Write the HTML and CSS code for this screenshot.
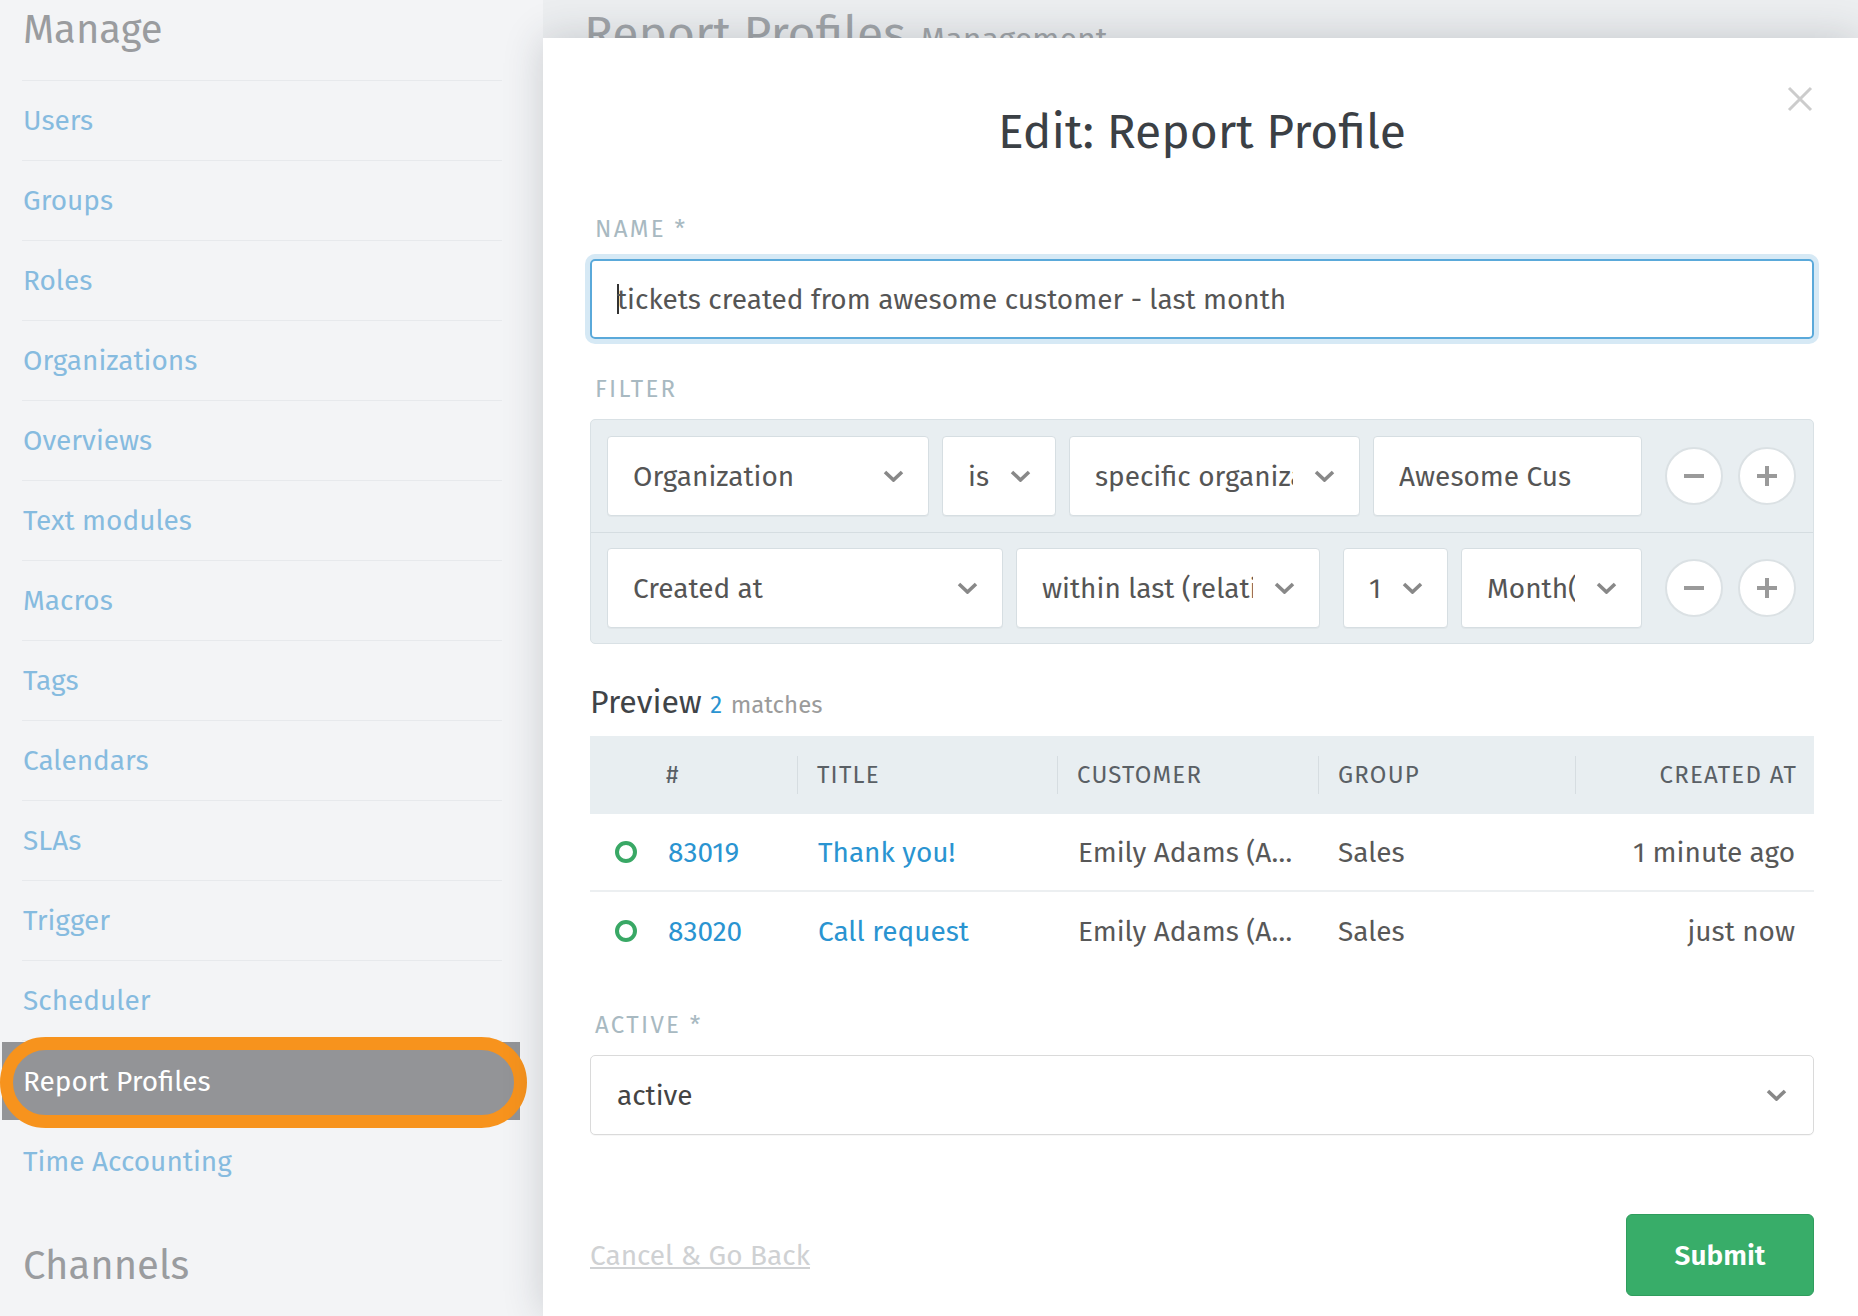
FILE: index.html
```html
<!DOCTYPE html>
<html lang="en">
<head>
<meta charset="utf-8">
<title>Edit: Report Profile</title>
<link rel="stylesheet" href="styles.css">
</head>
<body>
<div class="app">
  <aside class="sidebar">
    <h2 class="nav-heading">Manage</h2>
    <ul class="nav-list">
      <li class="nav-item">Users</li>
      <li class="nav-item">Groups</li>
      <li class="nav-item">Roles</li>
      <li class="nav-item">Organizations</li>
      <li class="nav-item">Overviews</li>
      <li class="nav-item">Text modules</li>
      <li class="nav-item">Macros</li>
      <li class="nav-item">Tags</li>
      <li class="nav-item">Calendars</li>
      <li class="nav-item">SLAs</li>
      <li class="nav-item">Trigger</li>
      <li class="nav-item">Scheduler</li>
      <li class="nav-item is-active">Report Profiles<span class="annotation"></span></li>
      <li class="nav-item">Time Accounting</li>
    </ul>
    <h2 class="nav-heading nav-heading--next">Channels</h2>
  </aside>

  <main class="main">
    <div class="page-header">
      <h1 class="page-title">Report Profiles <small class="page-subtitle">Management</small></h1>
    </div>

    <section class="modal">
      <span class="modal-close">
        <svg viewBox="0 0 26 26" width="26" height="26"><path d="M2 2 L24 24 M24 2 L2 24" stroke="#cccccc" stroke-width="3" fill="none"/></svg>
      </span>
      <h2 class="modal-title">Edit: Report Profile</h2>

      <div class="field-label field-label--first">Name *</div>
      <div class="text-input is-focused"><span class="caret"></span>tickets created from awesome customer - last month</div>

      <div class="field-label">Filter</div>
      <div class="filter-box">
        <div class="filter-row filter-row--first">
          <div class="select w-org"><span class="select-text">Organization</span><svg class="chevron" viewBox="0 0 21 12"><path d="M2 2 L10.5 10 L19 2" /></svg></div>
          <div class="select w-is"><span class="select-text">is</span><svg class="chevron" viewBox="0 0 21 12"><path d="M2 2 L10.5 10 L19 2" /></svg></div>
          <div class="select w-specific"><span class="select-text">specific organization</span><svg class="chevron" viewBox="0 0 21 12"><path d="M2 2 L10.5 10 L19 2" /></svg></div>
          <div class="select w-value"><span class="select-text">Awesome Cus</span></div>
          <span class="circle-btn gap-wide"><svg viewBox="0 0 22 22" width="22" height="22"><path d="M1 11 H21" /></svg></span>
          <span class="circle-btn gap-btn"><svg viewBox="0 0 22 22" width="22" height="22"><path d="M1 11 H21 M11 1 V21" /></svg></span>
        </div>
        <div class="filter-row filter-row--second">
          <div class="select w-created"><span class="select-text">Created at</span><svg class="chevron" viewBox="0 0 21 12"><path d="M2 2 L10.5 10 L19 2" /></svg></div>
          <div class="select w-within"><span class="select-text">within last (relative)</span><svg class="chevron" viewBox="0 0 21 12"><path d="M2 2 L10.5 10 L19 2" /></svg></div>
          <div class="select w-num gap-wide"><span class="select-text">1</span><svg class="chevron" viewBox="0 0 21 12"><path d="M2 2 L10.5 10 L19 2" /></svg></div>
          <div class="select w-month"><span class="select-text">Month(s)</span><svg class="chevron" viewBox="0 0 21 12"><path d="M2 2 L10.5 10 L19 2" /></svg></div>
          <span class="circle-btn gap-wide"><svg viewBox="0 0 22 22" width="22" height="22"><path d="M1 11 H21" /></svg></span>
          <span class="circle-btn gap-btn"><svg viewBox="0 0 22 22" width="22" height="22"><path d="M1 11 H21 M11 1 V21" /></svg></span>
        </div>
      </div>

      <h3 class="preview-title">Preview <span class="preview-count">2</span> <span class="preview-count-label">matches</span></h3>
      <div class="table">
        <div class="table-head">
          <div class="th th--blank"></div>
          <div class="th th--num">#</div>
          <div class="th th--sep">Title</div>
          <div class="th th--sep">Customer</div>
          <div class="th th--sep">Group</div>
          <div class="th th--sep th--right">Created at</div>
        </div>
        <div class="table-row table-row--divided">
          <div class="td td--icon"><span class="status-icon"></span></div>
          <div class="td td--num link">83019</div>
          <div class="td td--title link">Thank you!</div>
          <div class="td td--cust">Emily Adams (A…</div>
          <div class="td td--group">Sales</div>
          <div class="td td--right">1 minute ago</div>
        </div>
        <div class="table-row">
          <div class="td td--icon"><span class="status-icon"></span></div>
          <div class="td td--num link">83020</div>
          <div class="td td--title link">Call request</div>
          <div class="td td--cust">Emily Adams (A…</div>
          <div class="td td--group">Sales</div>
          <div class="td td--right">just now</div>
        </div>
      </div>

      <div class="field-label field-label--active">Active *</div>
      <div class="select select--full"><span class="select-text">active</span><svg class="chevron" viewBox="0 0 21 12"><path d="M2 2 L10.5 10 L19 2" /></svg></div>

      <div class="modal-footer">
        <span class="cancel-link">Cancel &amp; Go Back</span>
        <span class="submit-btn">Submit</span>
      </div>
    </section>
  </main>
</div>
</body>
</html>
```

FILE: styles.css
```css
* { box-sizing: border-box; }

html, body {
  margin: 0;
  padding: 0;
}

body {
  width: 1858px;
  height: 1316px;
  overflow: hidden;
  font-family: "Fira Sans", "Open Sans", "Noto Sans", sans-serif;
  background: #f3f4f6;
}

.app {
  display: flex;
  width: 1858px;
  height: 1316px;
}

/* ---------- Sidebar ---------- */
.sidebar {
  width: 543px;
  flex: none;
  height: 1316px;
  background: #f3f4f6;
  overflow: hidden;
}

.nav-heading {
  margin: 0 41px 0 22px;
  padding: 0 0 20px 1px;
  height: 81px;
  font-size: 40px;
  line-height: 60px;
  font-weight: 400;
  color: #9a9c9f;
  border-bottom: 1px solid #e7e9ec;
}

.nav-heading--next {
  margin-top: 35px;
  border-bottom: none;
}

.nav-list {
  list-style: none;
  margin: 0;
  padding: 0;
}

.nav-item {
  position: relative;
  display: flex;
  align-items: center;
  height: 80px;
  margin: 0 41px 0 22px;
  padding-left: 1px;
  font-size: 28px;
  color: #86bbdf;
  border-bottom: 1px solid #e7e9ec;
}

.nav-item:last-child {
  border-bottom: none;
}

.nav-item.is-active {
  height: 78px;
  margin: 1px 23px 1px 2px;
  padding-left: 21px;
  background: #939497;
  color: #ffffff;
  border-bottom: none;
}

.annotation {
  position: absolute;
  left: -2px;
  top: -5px;
  width: 527px;
  height: 91px;
  border: 13px solid #f7931d;
  border-radius: 46px;
  pointer-events: none;
}

/* ---------- Main ---------- */
.main {
  flex: 1;
  display: flex;
  flex-direction: column;
  min-width: 0;
  background: #eceef0;
}

.page-header {
  height: 38px;
  flex: none;
  overflow: hidden;
  padding-left: 41px;
}

.page-title {
  margin: 0;
  padding-top: 10px;
  font-size: 48px;
  line-height: 48px;
  font-weight: 400;
  color: #a0a4a8;
  white-space: nowrap;
}

.page-subtitle {
  font-size: 32px;
  margin-left: 2px;
}

/* ---------- Modal ---------- */
.modal {
  position: relative;
  z-index: 1;
  flex: 1;
  background: #ffffff;
  box-shadow: 0 0 38px rgba(40, 50, 60, 0.2);
  padding: 64px 44px 0 47px;
}

.modal-close {
  position: absolute;
  top: 48px;
  right: 45px;
  width: 26px;
  height: 26px;
}

.modal-close svg { display: block; }

.modal-title {
  margin: 0;
  text-align: center;
  font-size: 48px;
  line-height: 60px;
  font-weight: 400;
  color: #3b4045;
}

.field-label {
  margin: 35px 0 15px;
  padding-left: 5px;
  font-size: 24px;
  line-height: 30px;
  letter-spacing: 2.3px;
  text-transform: uppercase;
  color: #a8b9c1;
}

.field-label--first { margin-top: 52px; margin-bottom: 15px; }
.field-label--active { margin-top: 40px; margin-bottom: 15px; }

.text-input {
  display: flex;
  align-items: center;
  height: 80px;
  padding-left: 25px;
  border: 2px solid #5aa9da;
  border-radius: 5px;
  box-shadow: 0 0 0 5px #d6e9f5;
  font-size: 28px;
  color: #555555;
  white-space: nowrap;
}

.caret {
  display: inline-block;
  width: 2px;
  height: 30px;
  margin-right: -2px;
  background: #333333;
}

/* ---------- Filter ---------- */
.filter-box {
  background: #e8eef1;
  border: 1px solid #d9e1e5;
  border-radius: 5px;
}

.filter-row {
  display: flex;
  align-items: center;
  gap: 13px;
  padding: 16px 16px 16px 16px;
}

.filter-row--first {
  border-bottom: 1px solid #d5dde1;
}

.filter-row--second {
  padding-top: 15px;
  padding-bottom: 15px;
}

.select {
  display: flex;
  align-items: center;
  height: 80px;
  flex: none;
  padding: 0 24px 0 25px;
  background: #ffffff;
  border: 1px solid #d6dee2;
  border-radius: 4px;
  box-shadow: 0 1px 0 rgba(0, 0, 0, 0.03);
  font-size: 28px;
  color: #555555;
}

.select-text {
  flex: 1;
  min-width: 0;
  overflow: hidden;
  white-space: nowrap;
}

.chevron {
  flex: none;
  width: 21px;
  height: 12px;
  margin-left: 21px;
  fill: none;
  stroke: #888888;
  stroke-width: 3.6;
}

.w-org { width: 322px; }
.w-is { width: 114px; }
.w-specific { width: 291px; }
.w-value { width: 269px; }
.w-created { width: 396px; }
.w-within { width: 304px; }
.w-num { width: 105px; }
.w-month { width: 181px; }

.gap-wide { margin-left: 10px; }
.gap-btn { margin-left: 2px; }

.circle-btn {
  display: flex;
  align-items: center;
  justify-content: center;
  flex: none;
  width: 58px;
  height: 58px;
  border-radius: 50%;
  background: #ffffff;
  border: 2px solid #dbe1e4;
}

.circle-btn svg {
  fill: none;
  stroke: #9a9a9a;
  stroke-width: 4;
}

/* ---------- Preview ---------- */
.preview-title {
  margin: 38px 0 11px;
  font-size: 32px;
  line-height: 40px;
  font-weight: 400;
  color: #3f4448;
}

.preview-count {
  font-size: 24px;
  color: #2a94d1;
}

.preview-count-label {
  font-size: 24px;
  color: #9b9b9b;
}

.table-head,
.table-row {
  display: grid;
  grid-template-columns: 60px 147px 260px 261px 257px 1fr;
  align-items: center;
}

.table-head {
  height: 78px;
  background: #e8eef1;
}

.th {
  height: 38px;
  line-height: 38px;
  font-size: 24px;
  letter-spacing: 1.2px;
  text-transform: uppercase;
  color: #5a6065;
  white-space: nowrap;
}

.th--num { padding-left: 16px; }
.th--sep { padding-left: 19px; border-left: 1px solid #d6dde1; }
.th--right { text-align: right; padding-right: 17px; }

.table-row {
  height: 78px;
  font-size: 28px;
  color: #585858;
}

.table-row--divided {
  border-bottom: 2px solid #eceff1;
}

.td { white-space: nowrap; }
.td--icon { padding-left: 25px; display: flex; align-items: center; }
.td--num { padding-left: 18px; }
.td--title { padding-left: 21px; }
.td--cust { padding-left: 21px; }
.td--group { padding-left: 20px; }
.td--right { text-align: right; padding-right: 19px; }

.link { color: #2a94d1; }

.status-icon {
  display: block;
  width: 22px;
  height: 22px;
  border: 4px solid #39a865;
  border-radius: 50%;
}

/* ---------- Active select ---------- */
.select--full {
  width: 100%;
  padding-left: 26px;
  padding-right: 26px;
  border-color: #dadada;
  border-radius: 5px;
  color: #444444;
}

/* ---------- Footer ---------- */
.modal-footer {
  display: flex;
  justify-content: space-between;
  align-items: center;
  margin-top: 79px;
}

.cancel-link {
  font-size: 28px;
  color: #cfd1d3;
  text-decoration: underline;
}

.submit-btn {
  display: flex;
  align-items: center;
  justify-content: center;
  width: 188px;
  height: 82px;
  background: #38ad69;
  border: 1px solid #2f9d5d;
  border-radius: 6px;
  font-size: 28px;
  font-weight: 600;
  color: #ffffff;
}
```
